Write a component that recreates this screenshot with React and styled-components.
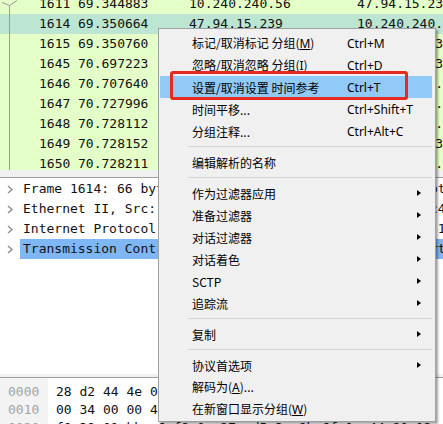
import React from 'react'
import styled, { createGlobalStyle } from 'styled-components'

const GlobalStyle = createGlobalStyle`
  html, body {
    margin: 0;
    padding: 0;
    background: #fff;
    overflow: hidden;
  }
`

const mono = `"DejaVu Sans Mono", "Liberation Mono", monospace`

const Screen = styled.div`
  position: relative;
  width: 443px;
  height: 424px;
  overflow: hidden;
  background: #fff;
  font-family: ${mono};
  font-size: 13px;
  color: #111;
`

const PacketPane = styled.div`
  position: relative;
  height: 170px;
  overflow: hidden;
  background: #e4ffc7;
`

const PacketList = styled.div`
  margin-top: -6px;
`

const PacketRow = styled.div`
  display: grid;
  grid-template-columns: 39px 39px 111px 168px 1fr;
  height: 20px;
  line-height: 20px;
  white-space: nowrap;
  overflow: hidden;
  background: ${p => (p.$current ? '#bce6d2' : 'transparent')};
`

const Cell = styled.span`
  overflow: hidden;
`

const TreeMark = styled.svg`
  position: absolute;
  left: 0;
  top: 0;
`

const Splitter = styled.div`
  height: ${p => p.$h}px;
  background: #f0f0f0;
  border-bottom: 1px solid #a0a0a0;
`

const DetailPane = styled.div`
  height: 195px;
  padding-top: 1px;
  overflow: hidden;
`

const DetailRow = styled.div`
  display: flex;
  align-items: center;
  height: 20px;
  white-space: nowrap;
`

const Expander = styled.div`
  width: 20px;
  flex: none;
  display: flex;
  align-items: center;
  padding-left: 7px;
  box-sizing: border-box;
`

const DetailText = styled.div`
  flex: 1;
  height: 20px;
  line-height: 20px;
  padding-left: 3px;
  overflow: hidden;
  background: ${p => (p.$selected ? '#7fb6f4' : 'transparent')};
`

const HexPane = styled.div`
  display: grid;
  grid-template-columns: 48px 1fr;
  height: 46px;
  overflow: hidden;
`

const OffsetCol = styled.div`
  background: #f3f3f3;
  color: #a3a3a3;
  padding: 5px 0 0 8px;
`

const BytesCol = styled.div`
  padding: 5px 0 0 8px;
  white-space: pre;
`

const HexLine = styled.div`
  height: 18px;
  line-height: 18px;
`

const Menu = styled.div`
  position: absolute;
  left: 158px;
  top: 28px;
  width: 278px;
  box-sizing: border-box;
  padding: 3px 3px 1px 1px;
  background: #f0f0f0;
  border: 1px solid #a0a0a0;
  box-shadow: 2px 2px 2px rgba(0, 0, 0, 0.35);
  font-family: "Noto Sans", "Noto Sans CJK SC", sans-serif;
  font-size: 12px;
  color: #000;
`

const Item = styled.div`
  position: relative;
  display: grid;
  grid-template-columns: 155px 1fr 4px;
  align-items: center;
  height: 22px;
  padding: 0 11px 0 32px;
  background: ${p => (p.$active ? '#91c9f7' : 'transparent')};
  white-space: nowrap;
`

const Label = styled.span`
  font-family: "Noto Sans CJK SC", "Noto Sans", sans-serif;
  u {
    font-family: "Noto Sans", sans-serif;
  }
`

const Shortcut = styled.span``

const SubArrow = styled.span`
  width: 0;
  height: 0;
  border-top: 3.5px solid transparent;
  border-bottom: 3.5px solid transparent;
  border-left: 4px solid #000;
`

const Separator = styled.div`
  height: 1px;
  margin: 4px 0 4px 28px;
  background: #d5d5d5;
`

const Callout = styled.div`
  position: absolute;
  left: 10px;
  top: -5px;
  width: 238px;
  height: 29px;
  box-sizing: border-box;
  border: 3px solid #e62a1f;
  border-radius: 3px;
`

const packets = [
  ['1611', '69.344883', '10.240.240.56', '47.94.15.239'],
  ['1614', '69.350664', '47.94.15.239', '10.240.240.56', true],
  ['1615', '69.350760', '10.240.240.56', '47.94.15.239'],
  ['1645', '70.697223', '10.240.240.56', '47.94.15.239'],
  ['1646', '70.707640', '47.94.15.239', '10.240.240.56'],
  ['1647', '70.727996', '47.94.15.239', '10.240.240.56'],
  ['1648', '70.728112', '47.94.15.239', '10.240.240.56'],
  ['1649', '70.728152', '10.240.240.56', '47.94.15.239'],
  ['1650', '70.728211', '47.94.15.239', '10.240.240.56'],
]

const details = [
  'Frame 1614: 66 bytes on wire (528 bits), 66 bytes captured (528 bits)',
  'Ethernet II, Src: HuaweiTe_a1:3c:c4 (04:f9:38:a1:3c:c4), Dst: 28:d2:44:4e',
  'Internet Protocol Version 4, Src: 47.94.15.239, Dst: 10.240.240.56',
  'Transmission Control Protocol, Src Port: 443, Dst Port: 50936, Seq: 1',
]

const hex = [
  ['0000', '28 d2 44 4e 05 6c 04 f9  38 a1 3c c4 08 00 45 00   (.DN.l..8.<...E.'],
  ['0010', '00 34 00 00 40 00 33 06  5b 2e 2f 5e 0f ef 0a f0   .4..@.3.[./^....'],
  ['0020', 'f0 38 01 bb c6 f8 0e 27  d5 3a 9b 6f 1c 44 80 12   .8.....\'.:.o.D..'],
]

const Chevron = () => (
  <svg width="6" height="9" viewBox="0 0 6 9">
    <polyline points="1,1 5,4.5 1,8" fill="none" stroke="#8c8c8c" strokeWidth="1.4" />
  </svg>
)

const menu = [
  { label: <>标记/取消标记 分组(<u>M</u>)</>, key: 'Ctrl+M' },
  { label: <>忽略/取消忽略 分组(<u>I</u>)</>, key: 'Ctrl+D' },
  { label: <>设置/取消设置 时间参考</>, key: 'Ctrl+T', active: true },
  { label: <>时间平移...</>, key: 'Ctrl+Shift+T' },
  { label: <>分组注释...</>, key: 'Ctrl+Alt+C' },
  'sep',
  { label: <>编辑解析的名称</> },
  'sep',
  { label: <>作为过滤器应用</>, sub: true },
  { label: <>准备过滤器</>, sub: true },
  { label: <>对话过滤器</>, sub: true },
  { label: <>对话着色</>, sub: true },
  { label: <>SCTP</>, sub: true },
  { label: <>追踪流</>, sub: true },
  'sep',
  { label: <>复制</>, sub: true },
  'sep',
  { label: <>协议首选项</>, sub: true },
  { label: <>解码为(<u>A</u>)...</> },
  { label: <>在新窗口显示分组(<u>W</u>)</> },
]

const App = () => {
  return (
    <Screen>
      <GlobalStyle />
      <PacketPane>
        <TreeMark width="20" height="170">
          <path d="M2 2.5 L9.5 5.5 L17 0.5 M9.5 5.5 V170" fill="none" stroke="#9a9a9a" strokeWidth="1" />
        </TreeMark>
        <PacketList>
          {packets.map(([no, time, src, dst, cur]) => (
            <PacketRow key={no} $current={cur}>
              <Cell />
              <Cell>{no}</Cell>
              <Cell>{time}</Cell>
              <Cell>{src}</Cell>
              <Cell>{dst}</Cell>
            </PacketRow>
          ))}
        </PacketList>
      </PacketPane>
      <Splitter $h={7} />
      <DetailPane>
        {details.map((d, i) => (
          <DetailRow key={i}>
            <Expander><Chevron /></Expander>
            <DetailText $selected={i === 3}>{d}</DetailText>
          </DetailRow>
        ))}
      </DetailPane>
      <Splitter $h={3} />
      <HexPane>
        <OffsetCol>
          {hex.map(h => <HexLine key={h[0]}>{h[0]}</HexLine>)}
        </OffsetCol>
        <BytesCol>
          {hex.map(h => <HexLine key={h[0]}>{h[1]}</HexLine>)}
        </BytesCol>
      </HexPane>

      <Menu>
        {menu.map((m, i) =>
          m === 'sep' ? (
            <Separator key={i} />
          ) : (
            <Item key={i} $active={m.active}>
              <Label>{m.label}</Label>
              <Shortcut>{m.key}</Shortcut>
              {m.sub ? <SubArrow /> : <span />}
              {m.active && <Callout />}
            </Item>
          )
        )}
      </Menu>
    </Screen>
  )
}

export default App
